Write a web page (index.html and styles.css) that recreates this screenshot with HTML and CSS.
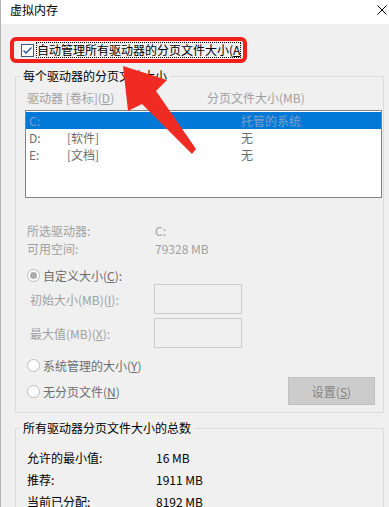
FILE: index.html
```html
<!DOCTYPE html>
<html lang="zh-CN">

<head>
    <meta charset="UTF-8">
    <meta name="viewport" content="width=device-width, initial-scale=1.0">
    <title>虚拟内存</title>
    <link rel="stylesheet" href="styles.css">
</head>

<body>
    <div class="window">
        <div class="titlebar">
            <span class="title">虚拟内存</span>
            <svg class="close" width="10" height="10" viewBox="0 0 10 10">
                <path d="M0.5 0.5 L9.5 9.5 M9.5 0.5 L0.5 9.5" stroke="#000" stroke-width="1" fill="none" />
            </svg>
        </div>

        <div class="dialog">
            <div class="auto-row">
                <label class="highlight">
                    <span class="checkbox">
                        <svg width="13" height="13" viewBox="0 0 13 13">
                            <rect x="0.5" y="0.5" width="12" height="12" fill="#fff" stroke="#3c5a87" />
                            <path d="M2.5 6.5 L5 9 L10.5 3.5" stroke="#1f4f9c" stroke-width="1.3" fill="none" />
                        </svg>
                    </span>
                    <span class="focus-text">自动管理所有驱动器的分页文件大小(<u>A</u></span>
                </label>
            </div>

            <fieldset class="group group-drives">
                <legend>每个驱动器的分页文件大小</legend>
                <div class="list-head">
                    <span class="col-drive">驱动器 [卷标](<u>D</u>)</span>
                    <span>分页文件大小(MB)</span>
                </div>
                <div class="listbox">
                    <div class="list-row selected">
                        <span class="c1">C:</span><span class="c2"></span><span class="c3">托管的系统</span>
                    </div>
                    <div class="list-row">
                        <span class="c1">D:</span><span class="c2">[软件]</span><span class="c3">无</span>
                    </div>
                    <div class="list-row">
                        <span class="c1">E:</span><span class="c2">[文档]</span><span class="c3">无</span>
                    </div>
                </div>

                <div class="info-grid">
                    <span>所选驱动器:</span><span>C:</span>
                    <span>可用空间:</span><span>79328 MB</span>
                </div>

                <div class="radio-row first">
                    <span class="radio checked"></span>
                    <span>自定义大小(<u>C</u>):</span>
                </div>
                <div class="size-row">
                    <span>初始大小(MB)(<u>I</u>):</span>
                    <span class="textbox"></span>
                </div>
                <div class="size-row second">
                    <span>最大值(MB)(<u>X</u>):</span>
                    <span class="textbox"></span>
                </div>
                <div class="radio-row">
                    <span class="radio"></span>
                    <span>系统管理的大小(<u>Y</u>)</span>
                </div>
                <div class="radio-row last">
                    <span class="radio"></span>
                    <span>无分页文件(<u>N</u>)</span>
                    <span class="button">设置(<u>S</u>)</span>
                </div>
            </fieldset>

            <fieldset class="group group-total">
                <legend>所有驱动器分页文件大小的总数</legend>
                <div class="total-grid">
                    <span>允许的最小值:</span><span>16 MB</span>
                    <span>推荐:</span><span>1911 MB</span>
                    <span>当前已分配:</span><span>8192 MB</span>
                </div>
            </fieldset>
        </div>

        <svg class="arrow" width="389" height="507" viewBox="0 0 389 507">
            <polygon points="122,66 166,80 155,91 195,149 191,154 141,104 127,111" fill="#ef2b24" />
        </svg>
    </div>
</body>

</html>
```

FILE: styles.css
```css
body {
    margin: 0;
    font-family: "Noto Sans CJK SC", "Noto Sans", sans-serif;
    font-size: 12px;
    color: #000;
    background-color: #f0f0f0;
}

.window {
    position: relative;
    width: 389px;
    height: 507px;
    overflow: hidden;
    background-color: #f0f0f0;
    border-left: 1px solid #b4b4b4;
    box-sizing: border-box;
}

.titlebar {
    display: flex;
    justify-content: space-between;
    align-items: flex-start;
    height: 24px;
    padding: 0 2px 0 9px;
    background-color: #fff;
}

.title {
    line-height: 20px;
}

.close {
    margin-top: 5px;
}

.dialog {
    margin-left: -1px;
}

.auto-row {
    display: flex;
    margin-top: 13px;
    padding-left: 10px;
}

.highlight {
    display: flex;
    align-items: center;
    height: 26px;
    box-sizing: border-box;
    padding: 0 2px 0 7px;
    border: 4px solid #f0201a;
    border-radius: 6px;
    line-height: 14px;
}

.checkbox {
    display: flex;
    width: 13px;
    height: 13px;
}

.focus-text {
    margin-left: 2px;
    border: 1px dotted #000;
}

.group {
    margin: 6px 0 0 15px;
    width: 369px;
    box-sizing: border-box;
    border: 1px solid #dcdcdc;
    padding: 7px 0 7px 9px;
}

.group legend {
    margin-left: -5px;
    padding: 0 3px;
    line-height: 14px;
}

.list-head {
    display: flex;
    padding-left: 2px;
    line-height: 16px;
    color: #a0a0a0;
}

.col-drive {
    width: 180px;
}

.listbox {
    width: 357px;
    height: 88px;
    margin-top: 4px;
    padding-top: 1px;
    box-sizing: border-box;
    border: 1px solid #828282;
    background-color: #fff;
}

.list-row {
    display: flex;
    height: 17px;
    line-height: 17px;
    color: #6d6d6d;
}

.list-row.selected {
    background-color: #0078d7;
    color: #7fa0cc;
}

.c1 {
    width: 38px;
    padding-left: 3px;
}

.c2 {
    width: 174px;
}

.info-grid {
    display: grid;
    grid-template-columns: 128px auto;
    margin-top: 24px;
    padding-left: 2px;
    line-height: 18px;
    color: #a0a0a0;
}

.radio-row {
    display: flex;
    align-items: center;
    height: 18px;
    margin-top: 8px;
    padding-left: 2px;
    color: #6d6d6d;
}

.radio-row.last {
    height: 28px;
    margin-top: 3px;
}

.radio {
    width: 13px;
    height: 13px;
    margin-right: 3px;
    box-sizing: border-box;
    border: 1px solid #bcbcbc;
    border-radius: 50%;
    background-color: #fff;
    display: flex;
    align-items: center;
    justify-content: center;
}

.radio.checked::after {
    content: "";
    width: 7px;
    height: 7px;
    border-radius: 50%;
    background-color: #acacac;
}

.size-row {
    display: grid;
    grid-template-columns: 124px 88px;
    align-items: center;
    padding-left: 5px;
    color: #a0a0a0;
}

.size-row.second {
    margin-top: 4px;
}

.textbox {
    height: 30px;
    box-sizing: border-box;
    border: 1px solid #cccccc;
    background-color: #f0f0f0;
}

.button {
    margin-left: auto;
    margin-right: 8px;
    width: 87px;
    height: 28px;
    box-sizing: border-box;
    border: 1px solid #bfbfbf;
    background-color: #cccccc;
    color: #838383;
    display: flex;
    align-items: center;
    justify-content: center;
}

.group-total {
    margin-top: 8px;
    padding-top: 12px;
    padding-bottom: 20px;
}

.total-grid {
    display: grid;
    grid-template-columns: 129px auto;
    padding-left: 2px;
    line-height: 22px;
}

.arrow {
    position: absolute;
    top: 0;
    left: 0;
    pointer-events: none;
}
```
